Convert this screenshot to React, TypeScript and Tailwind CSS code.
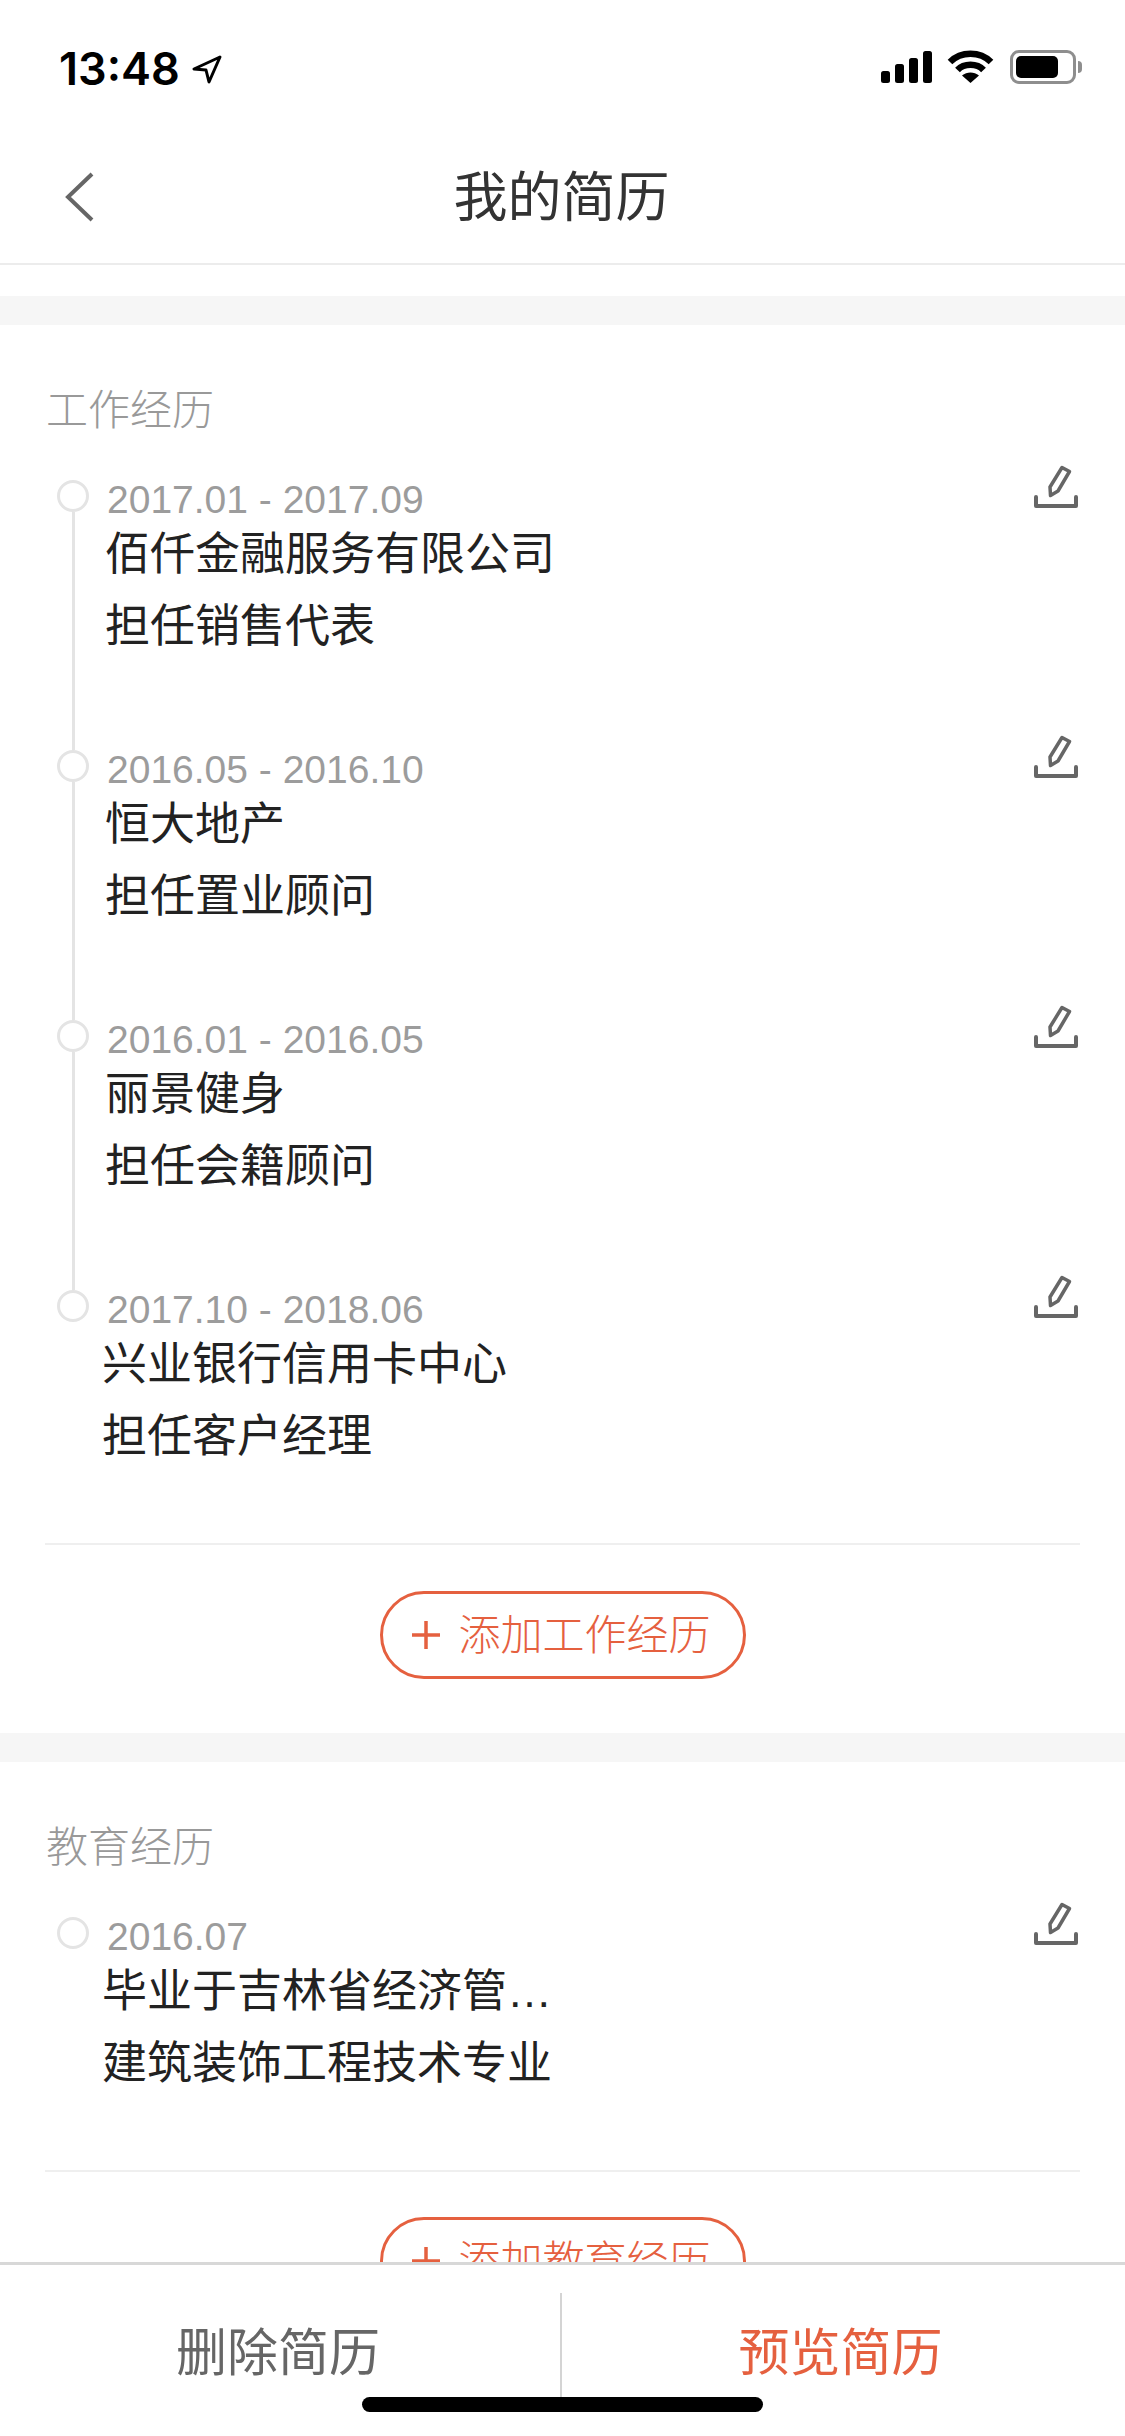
const cjk = "font-['Liberation_Sans','Noto_Sans_CJK_SC',sans-serif]"

const work = [
  { date: '2017.01 - 2017.09', company: '佰仟金融服务有限公司', role: '担任销售代表', indent: '-ml-[1px]' },
  { date: '2016.05 - 2016.10', company: '恒大地产', role: '担任置业顾问', indent: '-ml-[1px]' },
  { date: '2016.01 - 2016.05', company: '丽景健身', role: '担任会籍顾问', indent: '-ml-[1px]' },
  { date: '2017.10 - 2018.06', company: '兴业银行信用卡中心', role: '担任客户经理', indent: '-ml-[4px]' },
]

function EditIcon() {
  return (
    <svg width="44" height="44" viewBox="0 0 44 44" fill="none" stroke="#666" strokeLinejoin="round" strokeLinecap="round">
      <path d="M28 2.5 L35.5 6.5 L24 26 L16.5 30.5 L16 22 Z" strokeWidth="3.5" />
      <path d="M2 32 V41 H42 V32" strokeWidth="4" />
    </svg>
  )
}

function Item({ date, company, role, indent, last, hasLine }: { date: string; company: string; role: string; indent: string; last?: boolean; hasLine?: boolean }) {
  return (
    <div className={`flex ${last ? 'h-[268px]' : 'h-[270px]'}`}>
      <div className="mt-[15px] -mb-[15px] ml-[57px] flex w-[32px] flex-col items-center">
        <div className="h-[32px] w-[32px] shrink-0 rounded-full border-[3px] border-[#e4e4e4]" />
        {hasLine && <div className="w-[3px] flex-1 bg-[#e4e4e4]" />}
      </div>
      <div className="ml-[17px] flex-1 pt-[17px]">
        <div className="ml-[1px] text-[39px] leading-[36px] text-[#9c9c9c]">{date}</div>
        <div className={`${indent} relative top-[1px] w-[460px] truncate text-[45px] leading-[72px] font-normal text-[#222222]`}>{company}</div>
        <div className={`${indent} relative top-[1px] text-[45px] leading-[72px] font-normal text-[#222222]`}>{role}</div>
      </div>
      <div className="mr-[47px]"><EditIcon /></div>
    </div>
  )
}

function AddButton({ label }: { label: string }) {
  return (
    <div className="mx-auto flex h-[88px] w-[366px] items-center rounded-full border-[3px] border-[#e5603f] pl-[29px] text-[42px] font-light text-[#e5603f]">
      <svg width="28" height="28" viewBox="0 0 28 28" stroke="#e5603f" strokeWidth="3.5"><path d="M0 14 H28 M14 0 V28" /></svg>
      <span className="ml-[19px]">{label}</span>
    </div>
  )
}

export default function App() {
  return (
    <div className={`${cjk} relative flex h-[2436px] w-[1125px] flex-col overflow-hidden bg-white`}>
      {/* status bar */}
      <div className="flex h-[132px] shrink-0 items-start justify-between pt-[50px] pr-[43px] pl-[59px]">
        <div className="flex items-center">
          <span className="font-['Inter',sans-serif] text-[45px] leading-[38px] font-semibold text-black">13:48</span>
          <svg className="ml-[11px]" width="32" height="30" viewBox="0 0 32 30" fill="none" stroke="#000" strokeWidth="3" strokeLinejoin="round">
            <path d="M29 3 L3 15 L15 16 L18 28 Z" />
          </svg>
        </div>
        <div className="flex items-center">
          <svg width="52" height="34" viewBox="0 0 52 34" fill="#000">
            <rect x="0" y="21" width="9" height="12" rx="2.5" />
            <rect x="14" y="14" width="9" height="19" rx="2.5" />
            <rect x="28" y="8" width="9" height="25" rx="2.5" />
            <rect x="42" y="1" width="9" height="32" rx="2.5" />
          </svg>
          <svg className="ml-[14px]" width="47" height="34" viewBox="0 0 47 34" fill="none" stroke="#000" strokeWidth="6.5">
            <path d="M3 12 C14 1 33 1 44 12" />
            <path d="M10.5 20 C17 13 30 13 36.5 20" />
            <path d="M23.5 33 L15 25.5 C20 21.5 27 21.5 32 25.5 Z" fill="#000" stroke="none" />
          </svg>
          <div className="ml-[16px] flex items-center">
            <div className="h-[34px] w-[66px] rounded-[9px] border-[3px] border-[#8e8e8e] p-[3px]">
              <div className="h-full w-[42px] rounded-[5px] bg-black" />
            </div>
            <div className="ml-[2px] h-[12px] w-[4px] rounded-r-full bg-[#8e8e8e]" />
          </div>
        </div>
      </div>

      {/* nav */}
      <div className="relative flex h-[133px] shrink-0 items-center justify-center border-b-2 border-[#ececec]">
        <svg className="absolute top-[40px] left-[64px]" width="30" height="50" viewBox="0 0 30 50" fill="none" stroke="#666" strokeWidth="4">
          <path d="M28 2 L4 25 L28 48" />
        </svg>
        <span className="-ml-[2px] text-[54px] leading-none font-normal text-[#333333]">我的简历</span>
      </div>

      {/* content */}
      <div className="min-h-0 flex-1 overflow-hidden">
        <div className="mt-[31px] h-[29px] bg-[#f6f6f6]" />
        <div className="pt-[56px] pb-[54px]">
          <div className="mb-[24px] ml-[46px] text-[42px] leading-[60px] font-light text-[#999999]">工作经历</div>
          {work.map((w, i) => (
            <Item key={w.date} {...w} last={i === work.length - 1} hasLine={i < work.length - 1} />
          ))}
          <div className="mx-[45px] mb-[46px] h-[2px] bg-[#efefef]" />
          <AddButton label="添加工作经历" />
        </div>
        <div className="h-[29px] bg-[#f6f6f6]" />
        <div className="pt-[56px]">
          <div className="mb-[24px] ml-[46px] text-[42px] leading-[60px] font-light text-[#999999]">教育经历</div>
          <Item date="2016.07" company="毕业于吉林省经济管理干部学院" role="建筑装饰工程技术专业" indent="-ml-[4px]" last />
          <div className="mx-[45px] mb-[45px] h-[2px] bg-[#efefef]" />
          <AddButton label="添加教育经历" />
        </div>
      </div>

      {/* footer */}
      <div className="flex h-[174px] shrink-0 border-t-[3px] border-[#d8d8d8] bg-white pt-[28px]">
        <div className="flex h-[104px] w-[560px] items-center justify-center pt-[18px] pr-[4px] text-[51px] font-normal text-[#666666]">删除简历</div>
        <div className="h-[104px] w-[2px] bg-[#d4d4d4]" />
        <div className="flex h-[104px] flex-1 items-center justify-center pt-[18px] pr-[6px] text-[51px] font-normal text-[#e5603f]">预览简历</div>
      </div>

      {/* home indicator */}
      <div className="absolute top-[2397px] left-[362px] h-[15px] w-[401px] rounded-full bg-black" />
    </div>
  )
}
